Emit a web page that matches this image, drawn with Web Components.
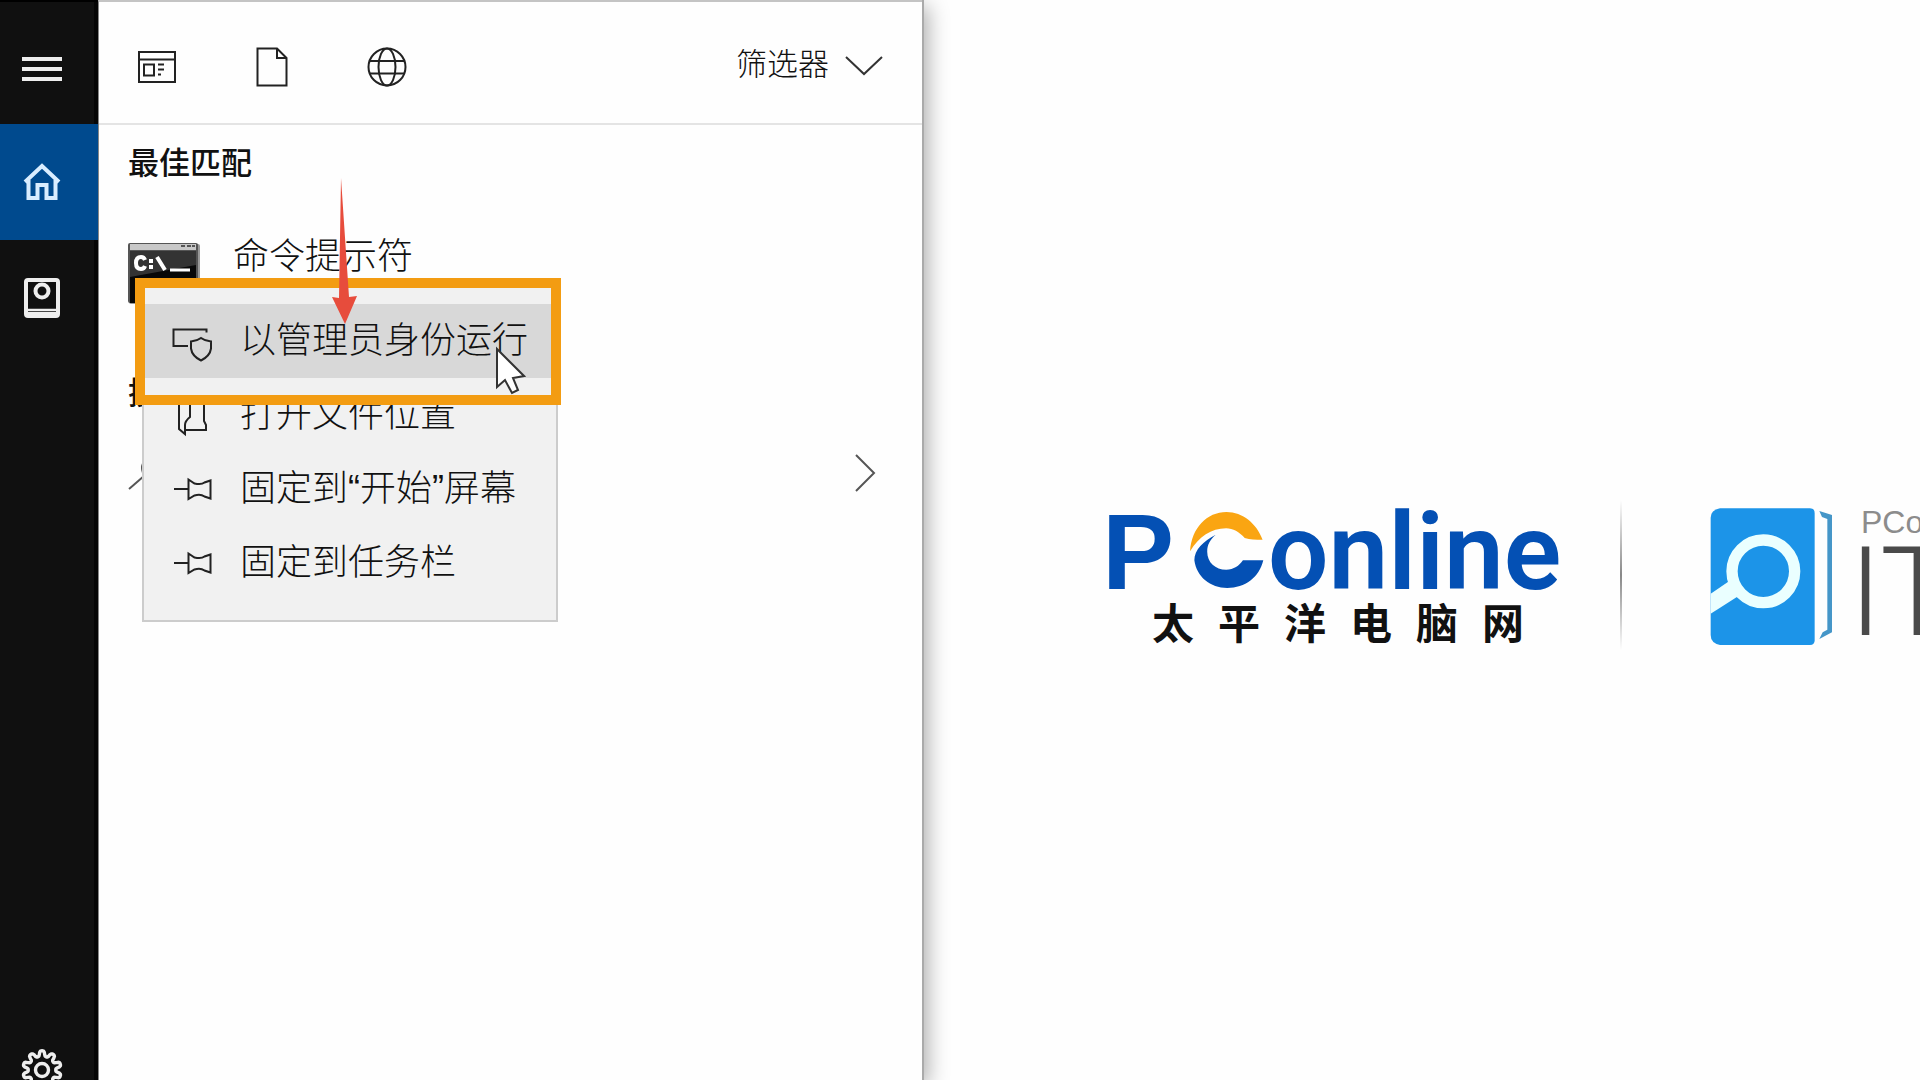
<!DOCTYPE html>
<html lang="zh-CN">
<head>
<meta charset="utf-8">
<title>搜索</title>
<style>
    body {
        margin: 0;
        height: 100vh;
        overflow: hidden;
        background: #fefefe;
        font-family: "Liberation Sans", "Noto Sans CJK SC", sans-serif;
        color: #111;
    }
</style>
</head>
<body>
<search-page></search-page>

<script>
const define = (name, html) => {
    const tmpl = document.createElement('template');
    tmpl.innerHTML = html;
    customElements.define(name, class extends HTMLElement {
        constructor() {
            super();
            this.attachShadow({ mode: 'open' });
            this.shadowRoot.appendChild(tmpl.content.cloneNode(true));
        }
        connectedCallback() {
            const button = this.shadowRoot.querySelector('button');
            if (button && this.hasAttribute('label')) {
                button.setAttribute('aria-label', this.getAttribute('label'));
            }
        }
    });
};

// ---- left rail ----
define('rail-button', `
    <style>
        :host { display: block; height: 116px; }
        button {
            width: 100%; height: 100%; margin: 0; border: 0;
            padding: 0 14px 0 0;
            display: flex; align-items: center; justify-content: center;
            background: none; color: #eee;
        }
        :host([active]) button { background: #004a8e; color: #d9edff; }
    </style>
    <button type="button"><slot></slot></button>
`);

define('side-rail', `
    <style>
        :host {
            display: flex; flex-direction: column; flex: none;
            box-sizing: border-box; width: 98px;
            background: linear-gradient(to left, #050505 4px, #101010 4px); border-top: 2px solid #000;
        }
        nav { display: flex; flex-direction: column; flex: 1; }
        .menu { height: 122px; }
        .menu svg { padding-top: 12px; }
        .settings { margin-top: auto; margin-bottom: -48px; }
        svg { display: block; fill: none; stroke: currentColor; }
    </style>
    <nav aria-label="导航">
        <rail-button class="menu" label="菜单">
            <svg width="42" height="26" stroke-width="4"><path d="M1 3h40M1 13h40M1 23h40"/></svg>
        </rail-button>
        <rail-button active label="主页">
            <svg width="38" height="38" stroke-width="4"><path d="M2 19L19 3l17 16M5.500 17v18h9V22h9v13h9V17"/></svg>
        </rail-button>
        <rail-button label="笔记本">
            <svg width="38" height="42" stroke-width="4"><rect x="3" y="3" width="32" height="36" rx="2"/><circle cx="19" cy="14" r="6.500"/><path d="M4 33h30" stroke-width="2.500"/><path d="M4 37h30" stroke-width="4"/></svg>
        </rail-button>
        <rail-button class="settings" label="设置">
            <svg width="42" height="42" viewBox="-21 -21 42 42" stroke-width="3.400"><circle r="6.500"/><path id="gear"/></svg>
        </rail-button>
    </nav>
`);

// ---- search panel ----
define('tab-button', `
    <style>
        :host { display: block; width: 115px; }
        button {
            width: 100%; height: 100%; margin: 0; padding: 0; border: 0;
            display: flex; align-items: center; justify-content: center;
            background: none; color: #222;
        }
    </style>
    <button type="button"><slot></slot></button>
`);

define('filter-button', `
    <style>
        :host { display: block; margin-left: auto; }
        button {
            height: 100%; margin: 0; padding: 0 39px 0 0; border: 0;
            display: flex; align-items: center; gap: 16px;
            background: none; color: #111; font: inherit; font-size: 31px; font-weight: 300;
        }
        svg { fill: none; stroke: #333; stroke-width: 2; margin-top: 8px; }
    </style>
    <button type="button"><slot></slot><svg width="38" height="22"><path d="M1 3l18 17L37 3"/></svg></button>
`);

define('search-panel', `
    <style>
        :host {
            display: flex; flex-direction: column; box-sizing: border-box;
            width: 824px; flex: none;
            background: #fefefe; border-top: 2px solid #c4c4c4; border-left: 1px solid #888;
            box-shadow: 2px 0 0 #aaa, 6px 6px 20px rgba(0, 0, 0, .32);
        }
        header { display: flex; height: 121px; border-bottom: 2px solid #e4e4e4; }
        .tabs { display: flex; padding-top: 8px; }
        .filter { height: 118px; }
        svg { display: block; fill: none; stroke: currentColor; stroke-width: 2; }
        main { padding: 16px 46px 0 29px; }
        h2 { margin: 0; font-size: 31px; line-height: 46px; font-weight: 500; }
        .best { display: flex; gap: 33px; padding-top: 46px; height: 138px; }
        .best svg { margin-top: 10px; stroke: none; flex: none; }
        .name { font-size: 36px; line-height: 48px; font-weight: 300; }
        .more { display: flex; align-items: center; justify-content: space-between; height: 48px; padding-top: 32px; color: #555; }
    </style>
    <header>
        <div class="tabs">
            <tab-button label="应用"><svg width="38" height="32"><path d="M1 1h36v30H1zM1 8.500h36M6 13.500h10v11H6zM20 13.500h6M20 18.500h6M20 23.500h3"/></svg></tab-button>
            <tab-button label="文档"><svg width="32" height="40"><path d="M1.500 1.500H21L30.500 11v27.500h-29zM21 1.500V11h9.500"/></svg></tab-button>
            <tab-button label="网页"><svg width="40" height="40"><circle cx="20" cy="20" r="18.500"/><ellipse cx="20" cy="20" rx="8.500" ry="18.500"/><path d="M3 14h34M3 26.500h34"/></svg></tab-button>
        </div>
        <filter-button class="filter">筛选器</filter-button>
    </header>
    <main>
        <h2>最佳匹配</h2>
        <div class="best">
            <svg width="72" height="62" role="img" aria-label="命令提示符">
                <rect x="1" y="1" width="71" height="60" rx="2" fill="#999"/>
                <rect x="0" y="0" width="70" height="60" rx="2" fill="#555"/>
                <rect x="2" y="1" width="66" height="6" fill="#c8c8c8"/>
                <path d="M53 3h4M59 3h4M64 3h3" stroke="#555" stroke-width="2"/>
                <rect x="2" y="8" width="66" height="52" fill="#080808"/>
                <path d="M2 8h66v14L2 34z" fill="#333"/>
                <path d="M17 17q-1-3-4-3-5 0-5 6t5 6q3 0 4-3M23 16v4M23 22v4M29 14l8 13" fill="none" stroke="#fff" stroke-width="4"/>
                <path d="M42 27h20" stroke="#fff" stroke-width="3"/>
            </svg>
            <div class="name">命令提示符</div>
        </div>
        <h2>搜索建议</h2>
        <div class="more">
            <svg width="38" height="34"><circle cx="25" cy="12" r="11"/><path d="M16 20L1 33"/></svg>
            <svg width="22" height="40"><path d="M2 2l18 18L2 38"/></svg>
        </div>
    </main>
`);

// ---- context menu ----
define('menu-item', `
    <style>
        :host { display: block; height: 74px; }
        button {
            width: 100%; height: 100%; margin: 0; border: 0; padding: 0 0 0 28px;
            display: flex; align-items: center; gap: 28px;
            background: none; color: #111;
            font: inherit; font-size: 36px; line-height: 48px; font-weight: 300; white-space: nowrap;
        }
        :host([hover]) button { background: #d8d8d8; }
    </style>
    <button type="button" role="menuitem"><slot name="icon"></slot><span><slot></slot></span></button>
`);

define('context-menu', `
    <style>
        :host {
            display: block; box-sizing: border-box; width: 416px;
            padding: 20px 0; background: #f1f1f1; border: 2px solid #ccc;
        }
        svg { display: block; flex: none; fill: none; stroke: #222; stroke-width: 2; overflow: visible; }
    </style>
    <div role="menu">
        <menu-item hover>
            <svg slot="icon" width="40" height="40"><path d="M16 25H1.500V8.500h33v3M29 17q4 3 10 3.500v7Q38 35 29 39.500 20 35 19 27.500v-7Q25 20 29 17z"/></svg>以管理员身份运行</menu-item>
        <menu-item>
            <svg slot="icon" width="40" height="40"><path d="M18 4v18q-5 4-5 8v9l-6-5V2zM13 35h21v-5l-2-4V4H18"/></svg>打开文件位置</menu-item>
        <menu-item>
            <svg slot="icon" width="40" height="40"><path d="M2 20h14.500M16.500 10.500l6 4q7 1.500 10-1l6-2v18l-6-2q-4-3-10-1l-6 3.500z"/></svg>固定到“开始”屏幕</menu-item>
        <menu-item>
            <svg slot="icon" width="40" height="40"><path d="M2 20h14.500M16.500 10.500l6 4q7 1.500 10-1l6-2v18l-6-2q-4-3-10-1l-6 3.500z"/></svg>固定到任务栏</menu-item>
    </div>
`);

// ---- logos on the right ----
define('pconline-logo', `
    <style>
        :host { display: block; width: 429px; flex: none; }
        .word { display: flex; align-items: baseline; height: 88px; line-height: 90px; color: #0450b4; }
        .p { font-size: 108px; font-weight: 700; }
        .rest { font-family: Roboto, sans-serif; font-size: 107px; font-weight: 600; }
        svg { flex: none; align-self: flex-start; margin: 0 4px 0 15px; }
        .cn {
            width: 372px; margin: 8px 0 0 50px;
            font-size: 42px; line-height: 44px; font-weight: 700; text-align-last: justify; color: #111;
        }
    </style>
    <div class="word">
        <span class="p">P</span>
        <svg width="75" height="84" viewBox="305 82 210 252" preserveAspectRatio="none">
            <path fill="#faa512" d="M308 215C312 145 355 97 410 97c45 0 85 35 101 83-20 0-35 0-50-5-15-18-33-29-52-29-42 0-76 25-101 69z"/>
            <path fill="#0450b4" d="M380 165c-35 20-60 45-60 77 6 50 45 83 92 83 50 0 90-32 101-83h-57c-11 17-25 28-47 28-30 0-53-22-53-54 0-22 8-36 24-51z"/>
        </svg>
        <span class="rest">online</span>
    </div>
    <div class="cn">太 平 洋 电 脑 网</div>
`);

define('book-logo', `
    <style>
        :host { display: flex; gap: 27px; }
        svg { flex: none; display: block; }
        .brand { font-size: 32px; line-height: 30px; color: #8c8c8c; }
        .title { margin-left: -12px; font-family: Roboto, sans-serif; font-size: 124px; line-height: 112px; font-weight: 300; color: #4a4a4a; }
    </style>
    <svg width="124" height="140" viewBox="332 80 372 420">
        <path fill="#1c94e8" d="M362 84h270q14 0 14 14v382q0 14-14 14H362q-28-6-28-30V112q0-22 28-28z"/>
        <path fill="#4596c8" d="M660 92l38 12v352l-38 20 10-20 14-8V116l-16-6z"/>
        <circle cx="492" cy="273" r="94" fill="none" stroke="#eaffff" stroke-width="34"/>
        <path fill="#eaffff" d="M334 340l66-45 28 45-94 60z"/>
    </svg>
    <div>
        <div class="brand">PConline</div>
        <div class="title">IT</div>
    </div>
`);

define('brand-area', `
    <style>
        :host { display: block; flex: 1; min-width: 0; overflow: hidden; }
        .row { display: flex; align-items: flex-start; padding: 507px 0 0 180px; width: max-content; }
        .line { width: 2px; height: 150px; margin: -7px 88px 0 89px; background: linear-gradient(transparent, #888, transparent); }
    </style>
    <div class="row">
        <pconline-logo></pconline-logo>
        <div class="line"></div>
        <book-logo></book-logo>
    </div>
`);

define('search-page', `
    <style>
        :host { display: flex; height: 100vh; position: relative; overflow: hidden; }
        side-rail { z-index: 1; }
        context-menu { position: absolute; left: 142px; top: 282px; z-index: 2; }
        .frame {
            position: absolute; left: 135px; top: 278px; z-index: 3;
            box-sizing: border-box; width: 426px; height: 127px; border: 10px solid #f39c12;
            pointer-events: none;
        }
        .arrow { position: absolute; left: 331px; top: 176px; z-index: 4; }
        .cursor { position: absolute; left: 494px; top: 346px; z-index: 4; }
    </style>
    <side-rail></side-rail>
    <search-panel></search-panel>
    <brand-area></brand-area>
    <context-menu></context-menu>
    <div class="frame"></div>
    <svg class="arrow" width="28" height="150"><path fill="#e74c3c" d="M10 2l8 119 8-1-12 28L1 121l7 1z"/></svg>
    <svg class="cursor" width="32" height="50"><path fill="#fff" stroke="#333" stroke-width="2" d="M3 3v38l8-7 7 13 6-3-5-12 11-2z"/></svg>
`);

// gear outline: ten rounded teeth
const rail = document.querySelector('search-page').shadowRoot.querySelector('side-rail');
const points = [];
for (let i = 0; i <= 144; i++) {
    const a = i / 144 * Math.PI * 2;
    const r = 16.5 + 2.8 * Math.tanh(2 * Math.cos(a * 10));
    points.push((r * Math.sin(a)).toFixed(1) + ' ' + (-r * Math.cos(a)).toFixed(1));
}
rail.shadowRoot.getElementById('gear').setAttribute('d', 'M' + points.join('L') + 'z');
</script>
</body>
</html>
